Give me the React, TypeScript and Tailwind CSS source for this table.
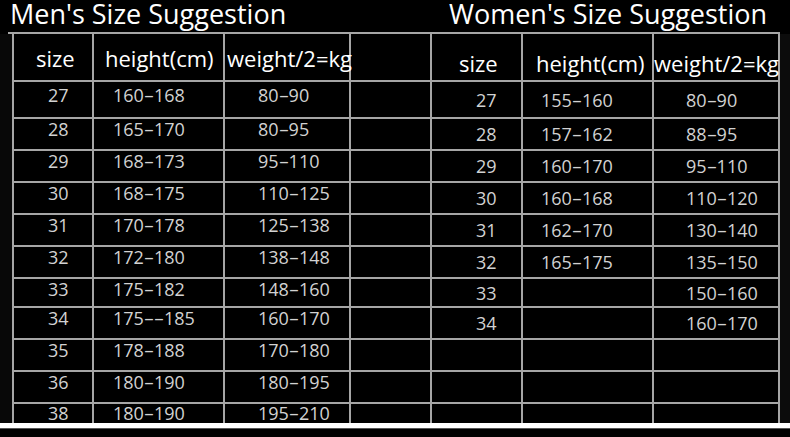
import React from "react";

const men: string[][] = [
  ["27", "160-168", "80-90"],
  ["28", "165-170", "80-95"],
  ["29", "168-173", "95-110"],
  ["30", "168-175", "110-125"],
  ["31", "170-178", "125-138"],
  ["32", "172-180", "138-148"],
  ["33", "175-182", "148-160"],
  ["34", "175--185", "160-170"],
  ["35", "178-188", "170-180"],
  ["36", "180-190", "180-195"],
  ["38", "180-190", "195-210"],
];

const women: string[][] = [
  ["27", "155-160", "80-90"],
  ["28", "157-162", "88-95"],
  ["29", "160-170", "95-110"],
  ["30", "160-168", "110-120"],
  ["31", "162-170", "130-140"],
  ["32", "165-175", "135-150"],
  ["33", "", "150-160"],
  ["34", "", "160-170"],
  ["", "", ""],
  ["", "", ""],
  ["", "", ""],
];

function Range({ text }: { text: string }) {
  const parts: React.ReactNode[] = [];
  let i = 0;
  let buf = "";
  for (const ch of text) {
    if (ch === "-") {
      if (buf) parts.push(<span key={i++}>{buf}</span>);
      buf = "";
      parts.push(
        <span key={i++} className="inline-block w-[10px] text-center scale-x-[1.8]">
          -
        </span>
      );
    } else {
      buf += ch;
    }
  }
  if (buf) parts.push(<span key={i++}>{buf}</span>);
  return <>{parts}</>;
}

const cell = "border-r-2 border-b-2 border-[#a6a6a6] whitespace-nowrap";

export default function App() {
  return (
    <div className="w-[790px] h-[437px] bg-black overflow-hidden font-['Open_Sans',sans-serif]">
      <div className="h-[32px] flex text-white text-[27px] leading-[27px]">
        <div className="w-[440px] pl-[10px]">Men's Size Suggestion</div>
        <div className="pl-[9px]">Women's Size Suggestion</div>
      </div>
      <div className="ml-[8px] w-[772px] h-[2px] bg-[#a6a6a6]" />
      <div className="flex h-[389px]">
        <div className="w-[12px] bg-[#080808]" />
        <div className="h-[389px] overflow-hidden">
          <div className="grid grid-cols-[80px_131px_126px_81px_91px_131px_126px] grid-rows-[48px_37px_32px_32px_32px_32px_32px_29px_32px_32px_32px_32px] border-l-2 border-[#a6a6a6]">
            <div className={`${cell} pt-[13px] pl-[22px] text-[22px] leading-none text-white`}>size</div>
            <div className={`${cell} pt-[13px] pl-[11px] text-[22px] leading-none text-white`}>height(cm)</div>
            <div className={`${cell} pt-[13px] pl-[2px] text-[22px] leading-none text-white`}>weight/2=kg</div>
            <div className={cell} />
            <div className={`${cell} pt-[18px] pl-[27px] text-[22px] leading-none text-white`}>size</div>
            <div className={`${cell} pt-[18px] pl-[13px] text-[22px] leading-none text-white`}>height(cm)</div>
            <div className={`${cell} pt-[18px] pl-0 text-[22px] leading-none text-white`}>weight/2=kg</div>
            {men.map((m, r) => {
              const w = women[r];
              const pt = r === 0 ? "pt-[4px]" : r === 10 ? "pt-0" : "pt-[1px]";
              return (
                <React.Fragment key={r}>
                  <div className={`${cell} ${pt} pl-[34px] text-[18px] leading-none text-[#d2d2d2]`}>{m[0]}</div>
                  <div className={`${cell} ${pt} pl-[19px] text-[18px] leading-none text-[#d2d2d2]`}>
                    <Range text={m[1]} />
                  </div>
                  <div className={`${cell} ${pt} pl-[33px] text-[18px] leading-none text-[#d2d2d2]`}>
                    <Range text={m[2]} />
                  </div>
                  <div className={cell} />
                  <div className={`${cell} flex items-center pl-[44px] text-[18px] leading-none text-[#d2d2d2]`}>{w[0]}</div>
                  <div className={`${cell} flex items-center pl-[18px] text-[18px] leading-none text-[#d2d2d2]`}>
                    <Range text={w[1]} />
                  </div>
                  <div className={`${cell} flex items-center pl-[32px] text-[18px] leading-none text-[#d2d2d2]`}>
                    <Range text={w[2]} />
                  </div>
                </React.Fragment>
              );
            })}
          </div>
        </div>
        <div className="flex-1 bg-[#0c0c0c]" />
      </div>
      <div className="h-[5px] bg-white" />
      <div className="h-[1px] bg-[#555555]" />
    </div>
  );
}
